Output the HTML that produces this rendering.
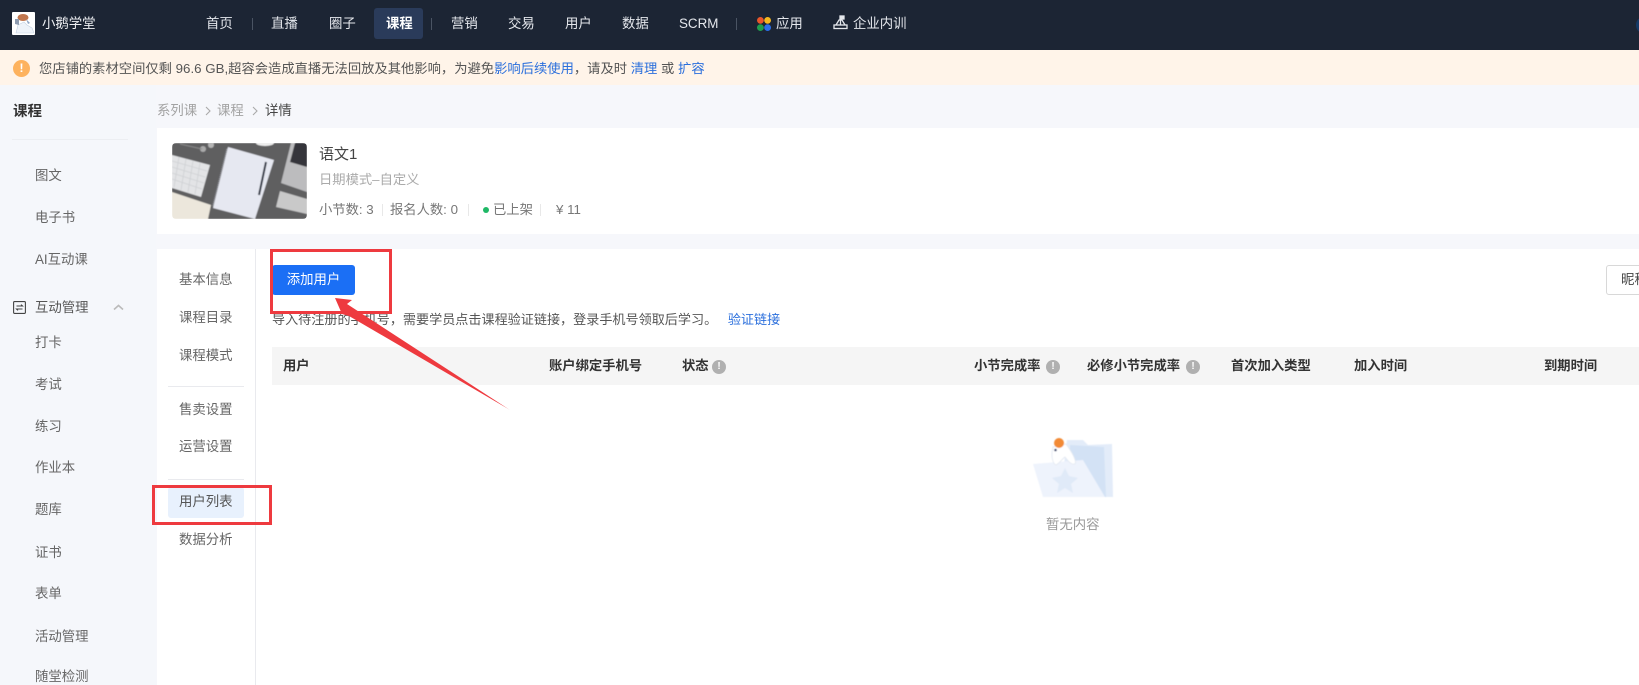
<!DOCTYPE html>
<html lang="zh"><head><meta charset="utf-8"><title>用户列表</title>
<style>
*{box-sizing:border-box}
html,body{margin:0;padding:0;width:1639px;height:685px;overflow:hidden;background:#f6f7fb}
body{position:relative;font-family:"Liberation Sans","Noto Sans CJK SC",sans-serif;font-size:13.4px;color:#555}
.t{position:absolute;line-height:20px;height:20px;white-space:nowrap}
.b{position:absolute}
.n{color:#e4e7ec}
.s{color:#666}
.h{font-weight:700;color:#333;font-size:13.3px}
.st{font-size:13.3px;color:#777}
a{color:#2b6fdc;text-decoration:none}
.ic{position:absolute;width:14px;height:14px;border-radius:50%;background:#b0b0b0;color:#fff;font-size:10px;line-height:14px;text-align:center;font-weight:700}
</style></head><body>
<!-- header -->
<div class="b" style="left:0;top:0;width:1639px;height:50px;background:#1c2534"></div>
<svg class="b" style="left:12px;top:12px" width="23" height="23" viewBox="0 0 23 23"><rect width="23" height="23" rx="1" fill="#fff"/><path d="M4 21 L6 13 L12 10 L15 13 L20 16 L22 21 Z" fill="#eef3f9" stroke="#c5d3e3" stroke-width=".6"/><ellipse cx="11" cy="5.500" rx="5.500" ry="3.500" fill="#c0764e"/><path d="M3 7 L7 7 L7 13 L3 12 Z" fill="#8d9bb0"/><path d="M14 7 L18 11 L16 12 Z" fill="#8fa6c4"/></svg>
<div class="t" style="left:42px;top:14px;color:#eef0f3">小鹅学堂</div>
<div class="t n" style="left:206px;top:14px">首页</div>
<div class="b" style="left:252px;top:18px;width:1px;height:12px;background:#4a5463"></div>
<div class="t n" style="left:271px;top:14px">直播</div>
<div class="t n" style="left:329px;top:14px">圈子</div>
<div class="b" style="left:374px;top:8px;width:49px;height:31px;background:#2a3b5a;border-radius:3px"></div>
<div class="t" style="left:386px;top:14px;color:#fff;font-weight:700">课程</div>
<div class="b" style="left:431px;top:18px;width:1px;height:12px;background:#4a5463"></div>
<div class="t n" style="left:451px;top:14px">营销</div>
<div class="t n" style="left:508px;top:14px">交易</div>
<div class="t n" style="left:565px;top:14px">用户</div>
<div class="t n" style="left:622px;top:14px">数据</div>
<div class="t n" style="left:679px;top:14px">SCRM</div>
<div class="b" style="left:736px;top:18px;width:1px;height:12px;background:#4a5463"></div>
<svg class="b" style="left:757px;top:17px" width="14" height="14" viewBox="0 0 14 14"><circle cx="3.400" cy="3.400" r="3.400" fill="#e8562a"/><circle cx="10.600" cy="3.400" r="3.400" fill="#f5b81f"/><circle cx="3.400" cy="10.600" r="3.400" fill="#1f9d4d"/><circle cx="10.600" cy="10.600" r="3.400" fill="#2a6fe8"/></svg>
<div class="t n" style="left:776px;top:14px">应用</div>
<svg class="b" style="left:833px;top:15px" width="15" height="15" viewBox="0 0 15 15" fill="none" stroke="#e4e7ec" stroke-width="1.3"><rect x="1" y="10" width="13" height="3.500"/><path d="M3 10 L6 5 H9 L12 10 M7.500 10 V5"/><rect x="7" y="1" width="4" height="3" fill="#e4e7ec"/></svg>
<div class="t n" style="left:853px;top:14px">企业内训</div>
<div class="b" style="left:1636px;top:17px;width:14px;height:16px;border-radius:50%;background:#153a66"></div>
<!-- notice -->
<div class="b" style="left:0;top:50px;width:1639px;height:35px;background:#fff4e9"></div>
<div class="b" style="left:13px;top:60px;width:17px;height:17px;border-radius:50%;background:#fdb25e;color:#fff;font-size:12px;line-height:17px;text-align:center;font-weight:700">!</div>
<div class="t" style="left:39px;top:59px;color:#555;font-size:13.3px">您店铺的素材空间仅剩 96.6 GB,超容会造成直播无法回放及其他影响，为避免<a>影响后续使用</a>，请及时 <a>清理</a> 或 <a>扩容</a></div>
<!-- left sidebar -->
<div class="b" style="left:0;top:85px;width:156px;height:600px;background:#f5f7fb"></div>
<div class="t" style="left:13px;top:102px;font-weight:700;color:#333;font-size:14.5px">课程</div>
<div class="b" style="left:12px;top:139px;width:116px;height:1px;background:#eceef2"></div>
<div class="t s" style="left:35px;top:166px">图文</div>
<div class="t s" style="left:35px;top:208px">电子书</div>
<div class="t s" style="left:35px;top:250px">AI互动课</div>
<svg class="b" style="left:13px;top:301px" width="13" height="13" viewBox="0 0 13 13" fill="none" stroke="#444" stroke-width="1.1"><rect x=".6" y=".6" width="11.800" height="11.800" rx="1"/><path d="M3.500 5 H9.500 L8 3.600 M9.500 8 H3.500 L5 9.400"/></svg>
<div class="t" style="left:35px;top:298px;color:#555">互动管理</div>
<svg class="b" style="left:113px;top:304px" width="11" height="7" viewBox="0 0 11 7" fill="none" stroke="#bbb" stroke-width="1.6"><path d="M1 5.500 L5.500 1.500 L10 5.500"/></svg>
<div class="t s" style="left:35px;top:333px">打卡</div>
<div class="t s" style="left:35px;top:375px">考试</div>
<div class="t s" style="left:35px;top:417px">练习</div>
<div class="t s" style="left:35px;top:458px">作业本</div>
<div class="t s" style="left:35px;top:500px">题库</div>
<div class="t s" style="left:35px;top:543px">证书</div>
<div class="t s" style="left:35px;top:584px">表单</div>
<div class="t s" style="left:35px;top:627px">活动管理</div>
<div class="t s" style="left:35px;top:667px">随堂检测</div>
<!-- breadcrumb -->
<div class="t" style="left:157px;top:101px;color:#a3a3a3">系列课</div>
<svg class="b" style="left:204px;top:106px" width="8" height="10" viewBox="0 0 8 10" fill="none" stroke="#aaa" stroke-width="1.1"><path d="M2 1 L6 5 L2 9"/></svg>
<div class="t" style="left:217px;top:101px;color:#a3a3a3">课程</div>
<svg class="b" style="left:251px;top:106px" width="8" height="10" viewBox="0 0 8 10" fill="none" stroke="#aaa" stroke-width="1.1"><path d="M2 1 L6 5 L2 9"/></svg>
<div class="t" style="left:265px;top:101px;color:#444">详情</div>
<!-- card 1 -->
<div class="b" style="left:157px;top:128px;width:1482px;height:106px;background:#fff"></div>
<svg class="b" style="left:172px;top:143px;border-radius:4px" width="135" height="76" viewBox="0 0 135 76">
<defs><filter id="bl"><feGaussianBlur stdDeviation=".5"/></filter></defs>
<g filter="url(#bl)">
<rect width="135" height="76" fill="#5f5f61"/>
<polygon points="0,12 38,22 29,54 0,45" fill="#e3e4e6"/>
<g stroke="#cfd1d4" stroke-width=".8"><path d="M0 18 L35 28 M0 24 L33 34 M0 30 L32 40 M0 36 L30 46"/><path d="M7 14 L2 44 M14 16 L9 47 M21 18 L16 49 M28 20 L23 51"/></g>
<polygon points="0,49 39,62 36,76 0,76" fill="#ece7dc"/>
<polygon points="56,4 102,17 83,76 41,65" fill="#e6e8f1"/>
<path d="M55 6 L41 63" stroke="#a9abb3" stroke-width="1.300" stroke-dasharray="1 1"/>
<line x1="94" y1="19" x2="87" y2="52" stroke="#2f3442" stroke-width="2"/>
<polygon points="119,0 135,0 135,49 109,40" fill="#bcbcbe"/>
<polygon points="123,0 135,0 135,24 118,19" fill="#35353a"/>
<polygon points="108,48 135,56 135,71 104,64" fill="#c9c9c9"/>
<circle cx="31" cy="6" r="3" fill="#aaa"/><circle cx="39" cy="2" r="3" fill="#b5b5b5"/>
<path d="M8 1 L30 6" stroke="#8a8a8a" stroke-width="1"/>
<ellipse cx="93" cy="0" rx="9" ry="3" fill="#eee"/>
</g></svg>
<div class="t" style="left:319px;top:145px;font-size:15px;color:#444">语文1</div>
<div class="t" style="left:319px;top:170px;font-size:13.3px;color:#aaa">日期模式–自定义</div>
<div class="t st" style="left:319px;top:200px">小节数: 3</div>
<div class="b" style="left:382px;top:204px;width:1px;height:12px;background:#e8e8e8"></div>
<div class="t st" style="left:390px;top:200px">报名人数: 0</div>
<div class="b" style="left:468px;top:204px;width:1px;height:12px;background:#e8e8e8"></div>
<div class="b" style="left:483px;top:207px;width:6px;height:6px;border-radius:50%;background:#1fb866"></div>
<div class="t st" style="left:493px;top:200px">已上架</div>
<div class="b" style="left:540px;top:204px;width:1px;height:12px;background:#e8e8e8"></div>
<div class="t st" style="left:556px;top:200px">¥ 11</div>
<!-- card 2 -->
<div class="b" style="left:157px;top:249px;width:1482px;height:436px;background:#fff"></div>
<div class="b" style="left:255px;top:249px;width:1px;height:436px;background:#e9eaee"></div>
<div class="t s" style="left:179px;top:270px">基本信息</div>
<div class="t s" style="left:179px;top:308px">课程目录</div>
<div class="t s" style="left:179px;top:346px">课程模式</div>
<div class="b" style="left:168px;top:386px;width:76px;height:1px;background:#e9eaee"></div>
<div class="t s" style="left:179px;top:400px">售卖设置</div>
<div class="t s" style="left:179px;top:437px">运营设置</div>
<div class="b" style="left:168px;top:479px;width:76px;height:1px;background:#e9eaee"></div>
<div class="b" style="left:168px;top:487px;width:76px;height:31px;background:#e8f1fd;border-radius:3px"></div>
<div class="t" style="left:179px;top:491px;margin-top:1px;color:#555">用户列表</div>
<div class="t s" style="left:179px;top:530px">数据分析</div>
<!-- main -->
<div class="b" style="left:272px;top:265px;width:83px;height:30px;background:#1b6ff5;border-radius:3px;color:#fff;text-align:center;line-height:30px">添加用户</div>
<div class="b" style="left:1606px;top:265px;width:60px;height:30px;border:1px solid #d8d8d8;border-radius:3px;background:#fff"></div>
<div class="t" style="left:1621px;top:270px;color:#444">昵称</div>
<div class="t" style="left:272px;top:310px;font-size:13.1px;color:#555">导入待注册的手机号，需要学员点击课程验证链接，登录手机号领取后学习。 <a style="margin-left:7px">验证链接</a></div>
<div class="b" style="left:272px;top:347px;width:1367px;height:38px;background:#f5f5f5"></div>
<div class="t h" style="left:283px;top:356px">用户</div>
<div class="t h" style="left:549px;top:356px">账户绑定手机号</div>
<div class="t h" style="left:682px;top:356px">状态</div><div class="ic" style="left:712px;top:360px">!</div>
<div class="t h" style="left:974px;top:356px">小节完成率</div><div class="ic" style="left:1046px;top:360px">!</div>
<div class="t h" style="left:1087px;top:356px">必修小节完成率</div><div class="ic" style="left:1186px;top:360px">!</div>
<div class="t h" style="left:1231px;top:356px">首次加入类型</div>
<div class="t h" style="left:1354px;top:356px">加入时间</div>
<div class="t h" style="left:1544px;top:356px">到期时间</div>
<!-- empty -->
<svg class="b" style="left:1025px;top:430px" width="95" height="72" viewBox="1025 430 95 72">
<defs><filter id="bl2"><feGaussianBlur stdDeviation=".5"/></filter></defs>
<g filter="url(#bl2)">
<polygon points="1067,440 1083,440 1088,445 1112,444 1113,497 1060,497" fill="#e3ecf9"/>
<polygon points="1070,445 1104,447 1106,497 1070,497" fill="#d3e2f5"/>
<polygon points="1033,464 1083,460 1105,497 1043,497" fill="#eef3fc"/>
<polygon points="1065,468 1069,476 1078,478 1071,484 1073,493 1065,488 1057,493 1059,484 1052,478 1061,476" fill="#e0eaf8"/>
<path d="M1053 447 C1051 455 1052 463 1056 465 C1060 463 1062 459 1065 457 C1068 461 1071 465 1075 464 C1077 461 1072 452 1066 444 Z" fill="#fff" stroke="#e2e8f1" stroke-width=".8"/>
<circle cx="1059" cy="443" r="5" fill="#f28a36"/>
<circle cx="1055.500" cy="450" r="1.300" fill="#3c4a70"/>
</g></svg>
<div class="t" style="left:1046px;top:515px;color:#999">暂无内容</div>
<!-- annotations -->
<div class="b" style="left:270px;top:249px;width:122px;height:65px;border:3px solid #ee3a3f"></div>
<div class="b" style="left:152px;top:485px;width:120px;height:40px;border:3px solid #ee3a3f"></div>
<svg class="b" style="left:0;top:0;pointer-events:none" width="1639" height="685"><polygon points="335,298 352,300 347,304 510,410 349,316 342,314" fill="#ee3a3f"/></svg>
</body></html>
